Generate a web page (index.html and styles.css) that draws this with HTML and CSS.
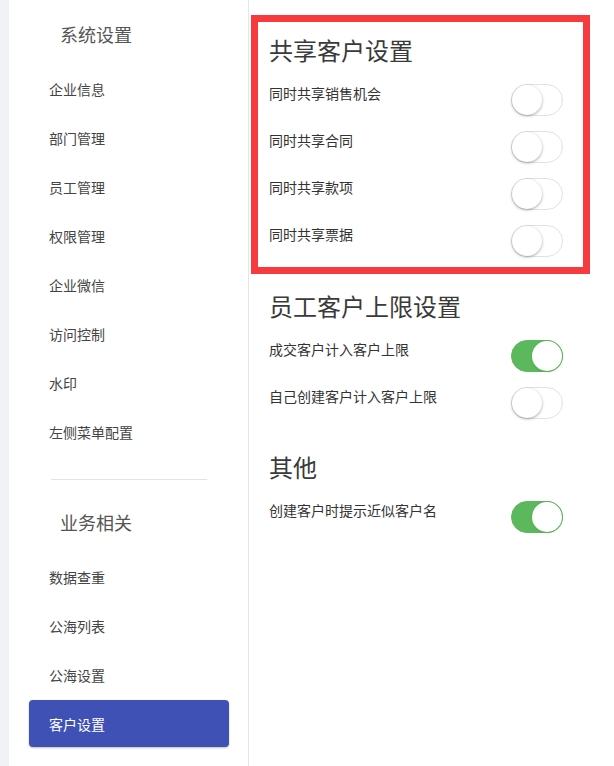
FILE: index.html
```html
<!DOCTYPE html>
<html lang="zh-CN">
<head>
<meta charset="utf-8">
<title>客户设置</title>
<link rel="stylesheet" href="styles.css">
</head>
<body>
<div class="page">
  <aside class="sidebar">
    <h3 class="side-title">系统设置</h3>
    <ul class="menu">
      <li class="menu-item">企业信息</li>
      <li class="menu-item">部门管理</li>
      <li class="menu-item">员工管理</li>
      <li class="menu-item">权限管理</li>
      <li class="menu-item">企业微信</li>
      <li class="menu-item">访问控制</li>
      <li class="menu-item">水印</li>
      <li class="menu-item">左侧菜单配置</li>
    </ul>
    <div class="divider"></div>
    <h3 class="side-title">业务相关</h3>
    <ul class="menu">
      <li class="menu-item">数据查重</li>
      <li class="menu-item">公海列表</li>
      <li class="menu-item">公海设置</li>
      <li class="menu-item active">客户设置</li>
    </ul>
  </aside>
  <main class="main">
    <section class="section highlight">
      <h2 class="sec-title">共享客户设置</h2>
      <div class="row"><span class="label">同时共享销售机会</span><span class="switch"><span class="knob"></span></span></div>
      <div class="row"><span class="label">同时共享合同</span><span class="switch"><span class="knob"></span></span></div>
      <div class="row"><span class="label">同时共享款项</span><span class="switch"><span class="knob"></span></span></div>
      <div class="row"><span class="label">同时共享票据</span><span class="switch"><span class="knob"></span></span></div>
    </section>
    <section class="section plain first-plain">
      <h2 class="sec-title">员工客户上限设置</h2>
      <div class="row"><span class="label">成交客户计入客户上限</span><span class="switch on"><span class="knob"></span></span></div>
      <div class="row"><span class="label">自己创建客户计入客户上限</span><span class="switch"><span class="knob"></span></span></div>
    </section>
    <section class="section plain other">
      <h2 class="sec-title">其他</h2>
      <div class="row"><span class="label">创建客户时提示近似客户名</span><span class="switch on"><span class="knob"></span></span></div>
    </section>
  </main>
</div>
</body>
</html>
```

FILE: styles.css
```css
* { box-sizing: border-box; }
html, body {
  margin: 0;
  padding: 0;
  background: #ffffff;
  font-family: "Noto Sans CJK SC", "Noto Sans", "Liberation Sans", sans-serif;
}
.page {
  display: flex;
  min-height: 766px;
  background: #f0f2f5;
  padding-left: 9px;
}
.sidebar {
  width: 240px;
  background: #ffffff;
  border-right: 1px solid #e6e6e6;
  padding-top: 16px;
}
.side-title {
  margin: 0 0 13px 51px;
  font-size: 18px;
  line-height: 36px;
  font-weight: normal;
  color: #555555;
}
.menu {
  list-style: none;
  margin: 0;
  padding: 0;
}
.menu-item {
  height: 47px;
  margin: 0 0 2px 20px;
  width: 200px;
  padding-left: 20px;
  display: flex;
  align-items: center;
  font-size: 14px;
  color: #444444;
  border-radius: 4px;
}
.menu-item.active {
  background: #3f51b5;
  color: #ffffff;
  box-shadow: 0 1px 2px rgba(0, 0, 0, 0.25);
}
.divider {
  margin: 24px 0 24px 42px;
  width: 156px;
  height: 1px;
  background: #e3e3e3;
}
.main {
  flex: 1;
  background: #ffffff;
  padding-left: 2px;
  padding-top: 15px;
}
.section {
  width: 339px;
}
.highlight {
  border: 7px solid #f73a3e;
  padding: 10px 20px 3px 11px;
}
.plain {
  padding: 0 27px 0 18px;
}
.first-plain { margin-top: 14px; }
.other { margin-top: 23px; }
.sec-title {
  margin: 0 0 8px 0;
  font-size: 24px;
  line-height: 36px;
  font-weight: normal;
  color: #3a3a3a;
}
.row {
  height: 47px;
  display: flex;
  align-items: center;
  justify-content: space-between;
}
.label {
  font-size: 14px;
  line-height: 20px;
  color: #333333;
  margin-bottom: 14px;
}
.switch {
  position: relative;
  width: 52px;
  height: 32px;
  border-radius: 16px;
  border: 1px solid #e2e2e2;
  background: #ffffff;
  flex-shrink: 0;
}
.knob {
  position: absolute;
  top: 0;
  left: 0;
  width: 30px;
  height: 30px;
  border-radius: 50%;
  background: #ffffff;
  box-shadow: 0 1px 3px rgba(0, 0, 0, 0.35);
}
.switch.on {
  background: #5cb85c;
  border-color: #5cb85c;
}
.switch.on .knob {
  left: 20px;
  box-shadow: 0 0 0 1px #5cb85c, 0 1px 2px rgba(0, 0, 0, 0.2);
}
```
